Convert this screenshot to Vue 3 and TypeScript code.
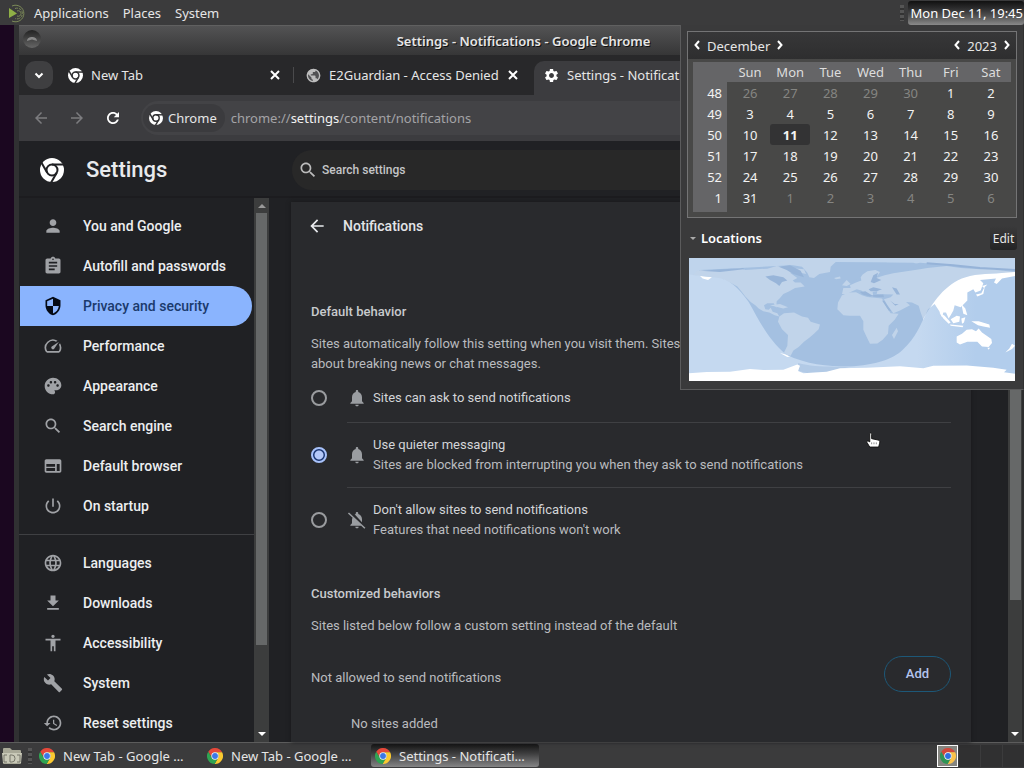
<script setup lang="ts">
import { ref } from 'vue'

interface NavItem {
  label: string
  icon: string
  active?: boolean
}

interface Behavior {
  id: string
  title: string
  detail?: string
  icon: string
}

const icons = {
  person: 'M12 12c2.21 0 4-1.79 4-4s-1.79-4-4-4-4 1.79-4 4 1.79 4 4 4zm0 2c-2.67 0-8 1.34-8 4v2h16v-2c0-2.66-5.33-4-8-4z',
  clipboard: 'M19 3h-4.18C14.4 1.84 13.3 1 12 1c-1.3 0-2.4.84-2.82 2H5c-1.1 0-2 .9-2 2v14c0 1.1.9 2 2 2h14c1.1 0 2-.9 2-2V5c0-1.1-.9-2-2-2zm-7 0c.55 0 1 .45 1 1s-.45 1-1 1-1-.45-1-1 .45-1 1-1zm2 14H7v-2h7v2zm3-4H7v-2h10v2zm0-4H7V7h10v2z',
  shield: 'M12 1L3 5v6c0 5.55 3.84 10.74 9 12 5.16-1.26 9-6.45 9-12V5l-9-4zm0 10.99h7c-.53 4.12-3.28 7.79-7 8.94V12H5V6.3l7-3.11v8.8z',
  speed: 'M20.38 8.57l-1.23 1.85a8 8 0 0 1-.22 7.58H5.07A8 8 0 0 1 15.58 6.85l1.85-1.23A10 10 0 0 0 3.35 19a2 2 0 0 0 1.72 1h13.85a2 2 0 0 0 1.74-1 10 10 0 0 0-.27-10.44zm-9.79 6.84a2 2 0 0 0 2.83 0l5.66-8.49-8.49 5.66a2 2 0 0 0 0 2.83z',
  palette: 'M12 2C6.49 2 2 6.49 2 12s4.49 10 10 10c1.38 0 2.5-1.12 2.5-2.5 0-.61-.23-1.2-.64-1.67-.08-.1-.13-.21-.13-.33 0-.28.22-.5.5-.5H16c3.31 0 6-2.69 6-6 0-4.96-4.49-9-10-9zm-5.5 11c-.83 0-1.5-.67-1.5-1.5S5.67 10 6.5 10s1.5.67 1.5 1.5S7.33 13 6.5 13zm3-4C8.67 9 8 8.33 8 7.5S8.67 6 9.5 6s1.5.67 1.5 1.5S10.33 9 9.5 9zm5 0c-.83 0-1.5-.67-1.5-1.5S13.67 6 14.5 6s1.5.67 1.5 1.5S15.33 9 14.5 9zm3 4c-.83 0-1.5-.67-1.5-1.5s.67-1.5 1.5-1.5 1.5.67 1.5 1.5-.67 1.5-1.5 1.5z',
  search: 'M15.5 14h-.79l-.28-.27C15.41 12.59 16 11.11 16 9.5 16 5.91 13.09 3 9.5 3S3 5.91 3 9.5 5.91 16 9.5 16c1.61 0 3.09-.59 4.23-1.57l.27.28v.79l5 4.99L20.49 19l-4.99-5zm-6 0C7.01 14 5 11.99 5 9.5S7.01 5 9.5 5 14 7.01 14 9.5 11.99 14 9.5 14z',
  web: 'M20 4H4c-1.1 0-1.99.9-1.99 2L2 18c0 1.1.9 2 2 2h16c1.1 0 2-.9 2-2V6c0-1.1-.9-2-2-2zm-5.5 14H4v-3.500h10.500V18zm0-5H4V9.500h10.500V13zm5.500 5h-3.500V9.500H20V18z',
  power: 'M13 3h-2v10h2V3zm4.830 2.170l-1.420 1.420C17.990 7.860 19 9.810 19 12c0 3.870-3.130 7-7 7s-7-3.130-7-7c0-2.190 1.010-4.140 2.580-5.420L6.170 5.170C4.230 6.820 3 9.260 3 12c0 4.970 4.030 9 9 9s9-4.030 9-9c0-2.740-1.230-5.180-3.170-6.830z',
  language: 'M12 2C6.480 2 2 6.480 2 12s4.480 10 10 10 10-4.480 10-10S17.520 2 12 2zm6.930 6h-2.950a15.650 15.650 0 0 0-1.380-3.560A8.030 8.030 0 0 1 18.920 8zM12 4.040c.830 1.200 1.480 2.530 1.910 3.960h-3.820c.430-1.430 1.080-2.760 1.910-3.960zM4.260 14C4.100 13.360 4 12.690 4 12s.1-1.360.260-2h3.380c-.080.660-.140 1.320-.140 2 0 .680.060 1.340.140 2H4.260zm.820 2h2.950c.320 1.250.780 2.450 1.380 3.560A7.990 7.990 0 0 1 5.080 16zm2.950-8H5.080a7.990 7.990 0 0 1 4.330-3.560A15.650 15.650 0 0 0 8.030 8zM12 19.960c-.830-1.200-1.480-2.530-1.910-3.960h3.820c-.430 1.430-1.080 2.760-1.910 3.960zM14.340 14H9.660c-.090-.660-.160-1.320-.160-2 0-.680.070-1.350.160-2h4.680c.090.650.160 1.320.160 2 0 .680-.070 1.340-.160 2zm.250 5.560c.600-1.110 1.060-2.310 1.380-3.560h2.950a8.030 8.030 0 0 1-4.330 3.560zM16.360 14c.080-.660.140-1.320.140-2 0-.680-.060-1.340-.140-2h3.380c.160.640.260 1.310.260 2s-.1 1.360-.260 2h-3.380z',
  download: 'M19 9h-4V3H9v6H5l7 7 7-7zM5 18v2h14v-2H5z',
  accessibility: 'M12 2c1.1 0 2 .9 2 2s-.9 2-2 2-2-.9-2-2 .9-2 2-2zm9 7h-6v13h-2v-6h-2v6H9V9H3V7h18v2z',
  wrench: 'M22.7 19l-9.1-9.1c.9-2.3.4-5-1.5-6.9-2-2-5-2.4-7.4-1.3L9 6 6 9 1.6 4.7C.4 7.1.9 10.1 2.9 12.1c1.9 1.9 4.6 2.4 6.9 1.5l9.1 9.1c.4.4 1 .4 1.4 0l2.3-2.3c.5-.4.5-1.1.1-1.4z',
  restore: 'M13 3c-4.97 0-9 4.03-9 9H1l3.89 3.89.07.14L9 12H6c0-3.87 3.13-7 7-7s7 3.13 7 7-3.13 7-7 7c-1.93 0-3.68-.79-4.94-2.06l-1.42 1.42C8.27 19.99 10.51 21 13 21c4.97 0 9-4.03 9-9s-4.03-9-9-9zm-1 5v5l4.28 2.54.72-1.21-3.5-2.08V8H12z',
  bell: 'M12 22c1.1 0 2-.9 2-2h-4c0 1.1.89 2 2 2zm6-6v-5c0-3.07-1.64-5.64-4.5-6.32V4c0-.83-.67-1.5-1.5-1.5s-1.5.67-1.5 1.5v.68C7.63 5.36 6 7.92 6 11v5l-2 2v1h16v-1l-2-2z',
  bellOff: 'M12 22c1.1 0 2-.9 2-2h-4c0 1.1.89 2 2 2zM18 14.700V11c0-3.070-1.640-5.640-4.500-6.320V4c0-.830-.670-1.500-1.500-1.500s-1.500.670-1.500 1.500v.680c-.500.120-.970.300-1.400.530zM2.400 2.900L1.100 4.200l5.600 5.200c-.450.900-.700 1.500-.700 2.600v4l-2 2v1h13l3.800 3.500 1.300-1.300z',
  back: 'M20 11H7.83l5.59-5.59L12 4l-8 8 8 8 1.41-1.41L7.83 13H20v-2z',
  forward: 'M4 11h12.170l-5.590-5.590L12 4l8 8-8 8-1.410-1.410L16.170 13H4v-2z',
  reload: 'M17.650 6.350C16.200 4.900 14.210 4 12 4c-4.420 0-8 3.580-8 8s3.580 8 8 8c3.730 0 6.840-2.550 7.730-6h-2.500c-.820 2.100-2.800 3.700-5.230 3.700A5.700 5.700 0 1 1 12 6.300c1.560 0 2.960.640 4 1.670L13 11h7V4l-2.350 2.350z',
  gear: 'M19.14 12.94c.04-.3.06-.61.06-.94 0-.32-.02-.64-.07-.94l2.03-1.58c.18-.14.23-.41.12-.61l-1.92-3.32c-.12-.22-.37-.29-.59-.22l-2.39.96c-.5-.38-1.03-.7-1.62-.94l-.36-2.54c-.04-.24-.24-.41-.48-.41h-3.84c-.24 0-.43.17-.47.41l-.36 2.54c-.59.24-1.13.57-1.62.94l-2.39-.96c-.22-.08-.47 0-.59.22L2.74 8.87c-.12.21-.08.47.12.61l2.03 1.58c-.05.3-.09.63-.09.94s.02.64.07.94l-2.03 1.58c-.18.14-.23.41-.12.61l1.92 3.32c.12.22.37.29.59.22l2.39-.96c.5.38 1.03.7 1.62.94l.36 2.54c.05.24.24.41.48.41h3.84c.24 0 .44-.17.47-.41l.36-2.54c.59-.24 1.13-.56 1.62-.94l2.39.96c.22.08.47 0 .59-.22l1.92-3.32c.12-.22.07-.47-.12-.61l-2.01-1.58zM12 15.6c-1.98 0-3.6-1.62-3.6-3.6s1.62-3.6 3.6-3.6 3.6 1.62 3.6 3.6-1.62 3.6-3.6 3.6z',
  globe: 'M12 2C6.480 2 2 6.480 2 12s4.480 10 10 10 10-4.480 10-10S17.520 2 12 2zm-1 17.930c-3.950-.490-7-3.850-7-7.930 0-.620.080-1.210.210-1.790L9 15v1c0 1.100.9 2 2 2v1.930zm6.900-2.540c-.260-.810-1-1.390-1.900-1.390h-1v-3c0-.550-.450-1-1-1H8v-2h2c.550 0 1-.450 1-1V7h2c1.100 0 2-.9 2-2v-.410c2.930 1.190 5 4.060 5 7.410 0 2.080-.8 3.970-2.100 5.390z',
}

const navPrimary: NavItem[] = [
  { label: 'You and Google', icon: icons.person },
  { label: 'Autofill and passwords', icon: icons.clipboard },
  { label: 'Privacy and security', icon: icons.shield, active: true },
  { label: 'Performance', icon: icons.speed },
  { label: 'Appearance', icon: icons.palette },
  { label: 'Search engine', icon: icons.search },
  { label: 'Default browser', icon: icons.web },
  { label: 'On startup', icon: icons.power },
]

const navSecondary: NavItem[] = [
  { label: 'Languages', icon: icons.language },
  { label: 'Downloads', icon: icons.download },
  { label: 'Accessibility', icon: icons.accessibility },
  { label: 'System', icon: icons.wrench },
  { label: 'Reset settings', icon: icons.restore },
]

const behaviors: Behavior[] = [
  { id: 'ask', title: 'Sites can ask to send notifications', icon: icons.bell },
  { id: 'quiet', title: 'Use quieter messaging', detail: 'Sites are blocked from interrupting you when they ask to send notifications', icon: icons.bell },
  { id: 'block', title: "Don't allow sites to send notifications", detail: "Features that need notifications won't work", icon: icons.bellOff },
]
const selected = ref('quiet')

const weekdays = ['Sun', 'Mon', 'Tue', 'Wed', 'Thu', 'Fri', 'Sat']
const weeks = [48, 49, 50, 51, 52, 1].map((week, row) => ({
  week,
  days: weekdays.map((_, col) => {
    const offset = row * 7 + col - 4
    if (offset < 1) return { n: offset + 30, muted: true, today: false }
    if (offset > 31) return { n: offset - 31, muted: true, today: false }
    return { n: offset, muted: false, today: offset === 11 }
  }),
}))

const tasks = [
  { title: 'New Tab - Google …', active: false },
  { title: 'New Tab - Google …', active: false },
  { title: 'Settings - Notificati…', active: true },
]

const land = [
  'M38 150L50 138L62 134L110 136L180 128L196 134L262 130L290 122L330 128L372 132L378 146L350 140L330 142L352 158L338 166L345 172L362 172L374 184L345 188L328 198L310 206L300 218L290 228L289 248L281 234L262 234L252 240L256 252L266 254L272 248L278 260L292 264L298 274L284 270L268 262L250 258L236 250L226 240L212 230L196 214L184 198L172 184L150 172L128 162L96 158Z',
  'M290 112L330 104L440 100L467 110L452 124L450 140L418 146L402 158L388 156L382 142L366 124L330 118Z',
  'M298 274L312 264L342 262L366 274L384 278L392 290L420 298L416 312L402 326L388 338L372 350L356 366L340 376L332 392L320 390L312 382L322 362L324 330L306 312L294 290Z',
  'M486 210L506 202L528 201L546 210L562 215L606 220L618 244L632 264L656 266L644 284L626 302L624 326L608 344L592 355L570 356L560 336L550 314L550 288L540 272L508 272L490 270L472 252L474 232Z',
  'M486 206L490 188L512 188L510 180L528 172L544 166L542 156L548 148L562 138L586 134L600 140L588 158L614 150L640 144L690 136L720 132L742 128L800 122L842 128L900 132L950 134L1005 140L1005 152L966 160L950 176L942 172L948 160L900 164L910 174L902 196L886 202L880 192L862 202L862 226L842 246L824 240L820 256L812 270L806 280L798 262L790 262L786 276L778 258L764 236L744 252L730 284L722 262L716 242L696 232L678 230L690 240L660 256L640 264L622 240L612 222L632 216L640 208L590 206L592 198L578 200L580 216L558 208L544 196L530 192L512 200L500 206Z',
  'M486 180L500 164L512 176L500 182ZM462 158L480 154L482 160L468 162ZM636 330L650 308L654 318L642 342Z',
  'M830 352L830 334L846 326L860 314L876 312L888 318L896 310L906 322L934 342L936 354L926 366L906 364L892 350L862 350L840 358ZM922 368L930 368L926 374Z',
  'M778 262L794 272L812 292L806 296L790 280ZM812 282L830 272L840 274L838 290L820 294ZM844 280L856 276L852 292L846 296ZM810 298L850 302L848 306L812 302ZM874 288L896 288L928 298L930 308L910 304L894 300ZM844 236L856 250L862 270L850 266ZM888 208L904 204L912 188L906 182L922 178L914 186L910 206L892 214Z',
  'M996 356L1005 362L996 372L976 382L988 370Z',
  'M300 384L318 388L330 394L322 396ZM60 152L96 156L84 164L68 160Z',
]
const antarctica = 'M27 445L80 441L150 440L210 432L250 435L310 434L352 418L360 422L354 438L370 445L440 440L480 430L560 428L660 424L730 430L760 422L860 421L940 428L980 434L972 442L1005 446V468H27Z'
const dayArea = 'M27 148L104 157C150 160 176 190 206 230C240 290 262 340 318 388C380 418 440 424 506 424C590 420 640 400 666 376C710 336 720 300 736 270C764 226 800 168 870 152C910 144 950 146 1005 140V468H27Z'
const chromeSector = 'M-10.1-6.490A12 12 0 0 1 10.670-5.500L0-5.500A5.500 5.500 0 0 0-4.760 2.750Z'
</script>

<template>
  <div class="desktop">
    <header class="panel top-panel">
      <svg class="distro" viewBox="0 0 20 20" aria-hidden="true">
        <path d="M2 5L10 10.500L2 15Z" fill="#8fb046" />
        <g fill="none" stroke="#7c8a58">
          <path d="M5 3A8.300 8.300 0 1 1 5 18" />
          <path d="M8 5.500A5.400 5.400 0 1 1 8 15.500" stroke-dasharray="3 1" />
          <path d="M10 8A2.800 2.800 0 1 1 10 13" />
        </g>
      </svg>
      <nav class="menus">
        <button type="button">Applications</button>
        <button type="button">Places</button>
        <button type="button">System</button>
      </nav>
      <span class="grip"></span>
      <button type="button" class="clock">Mon Dec 11, 19:45</button>
    </header>

    <div class="workspace">
      <section class="window">
        <div class="titlebar">
          <button type="button" class="window-menu" aria-label="Window menu">
            <svg viewBox="0 0 18 18"><path d="M4 11C4 5.500 14 5.500 14 11L9 9.500Z" fill="#888" /></svg>
          </button>
          <h2>Settings - Notifications - Google Chrome</h2>
        </div>

        <div class="tabstrip">
          <button type="button" class="tab-search" aria-label="Search tabs">
            <svg viewBox="0 0 12 12"><path d="M2.500 4.500L6 8L9.500 4.500" fill="none" stroke="#fff" stroke-width="2" /></svg>
          </button>
          <div class="tab first">
            <svg class="tab-icon mono" viewBox="-12 -12 24 24">
              <circle r="12" fill="#fff" />
              <g fill="none" stroke-width="2.400"><circle r="5.500" /><path d="M0-5.500H12" /><path d="M0-5.500H12" transform="rotate(120)" /><path d="M0-5.500H12" transform="rotate(240)" /></g>
            </svg>
            <span class="tab-title">New Tab</span>
            <button type="button" class="close" aria-label="Close New Tab">
              <svg viewBox="0 0 10 10"><path d="M1 1L9 9M9 1L1 9" stroke="#fff" stroke-width="2" /></svg>
            </button>
          </div>
          <div class="tab second">
            <svg class="tab-icon globe" viewBox="1 1 22 22"><circle cx="12" cy="12" r="10" fill="#515153" /><path :d="icons.globe" /></svg>
            <span class="tab-title">E2Guardian - Access Denied</span>
            <button type="button" class="close" aria-label="Close E2Guardian">
              <svg viewBox="0 0 10 10"><path d="M1 1L9 9M9 1L1 9" stroke="#fff" stroke-width="2" /></svg>
            </button>
          </div>
          <div class="tab current">
            <svg class="tab-icon" viewBox="1 1 22 22"><path :d="icons.gear" /></svg>
            <span class="tab-title">Settings - Notifications</span>
          </div>
        </div>

        <div class="toolbar">
          <button type="button" class="tool dim" aria-label="Back"><svg viewBox="0 0 24 24"><path :d="icons.back" /></svg></button>
          <button type="button" class="tool dim" aria-label="Forward"><svg viewBox="0 0 24 24"><path :d="icons.forward" /></svg></button>
          <button type="button" class="tool" aria-label="Reload"><svg viewBox="0 0 24 24"><path :d="icons.reload" /></svg></button>
          <div class="omnibox">
            <span class="chip">
              <svg class="tab-icon mono" viewBox="-12 -12 24 24">
                <circle r="12" fill="#fff" />
                <g fill="none" stroke-width="2.400"><circle r="5.500" /><path d="M0-5.500H12" /><path d="M0-5.500H12" transform="rotate(120)" /><path d="M0-5.500H12" transform="rotate(240)" /></g>
              </svg>
              Chrome
            </span>
            <span class="url" role="textbox" aria-label="Address">chrome://<b>settings</b>/content/notifications</span>
          </div>
        </div>

        <div class="settings-head">
          <svg class="brand mono" viewBox="-12 -12 24 24">
            <circle r="12" fill="#fff" />
            <g fill="none" stroke-width="2"><circle r="5.500" /><path d="M0-5.500H12" /><path d="M0-5.500H12" transform="rotate(120)" /><path d="M0-5.500H12" transform="rotate(240)" /></g>
          </svg>
          <h1>Settings</h1>
          <label class="search">
            <svg viewBox="0 0 24 24" aria-hidden="true"><path :d="icons.search" /></svg>
            <input type="search" placeholder="Search settings" aria-label="Search settings" />
          </label>
        </div>

        <div class="settings-body">
          <nav class="sidebar">
            <a v-for="item in navPrimary" :key="item.label" href="#" :class="{ active: item.active }">
              <svg viewBox="0 0 24 24" aria-hidden="true"><path :d="item.icon" /></svg>{{ item.label }}
            </a>
            <hr />
            <a v-for="item in navSecondary" :key="item.label" href="#">
              <svg viewBox="0 0 24 24" aria-hidden="true"><path :d="item.icon" /></svg>{{ item.label }}
            </a>
          </nav>
          <div class="scrollbar side-scroll">
            <svg viewBox="0 0 8 4"><path d="M0 4L4 0L8 4Z" fill="#999" /></svg>
            <span class="thumb"></span>
            <svg viewBox="0 0 8 4"><path d="M0 0L4 4L8 0Z" fill="#fff" /></svg>
          </div>

          <main class="card">
            <div class="card-head">
              <button type="button" aria-label="Back"><svg viewBox="0 0 24 24"><path :d="icons.back" /></svg></button>
              <h2>Notifications</h2>
            </div>
            <h3>Default behavior</h3>
            <p class="intro">Sites automatically follow this setting when you visit them. Sites usually send notifications to let you know about breaking news or chat messages.</p>
            <div class="options">
              <label v-for="b in behaviors" :key="b.id" class="option" :class="{ single: !b.detail }">
                <input v-model="selected" type="radio" name="behavior" :value="b.id" />
                <span class="option-body">
                  <svg viewBox="0 0 24 24" aria-hidden="true"><path :d="b.icon" /></svg>
                  <span class="option-text">
                    <span class="option-title">{{ b.title }}</span>
                    <span v-if="b.detail" class="option-detail">{{ b.detail }}</span>
                  </span>
                </span>
              </label>
            </div>
            <h3 class="custom">Customized behaviors</h3>
            <p class="note">Sites listed below follow a custom setting instead of the default</p>
            <div class="blocked">
              <span>Not allowed to send notifications</span>
              <button type="button">Add</button>
            </div>
            <p class="empty">No sites added</p>
          </main>

          <div class="scrollbar main-scroll">
            <span class="thumb"></span>
            <svg viewBox="0 0 8 4"><path d="M0 0L4 4L8 0Z" fill="#fff" /></svg>
          </div>
        </div>
      </section>

      <aside class="popup">
        <div class="calendar">
          <div class="cal-head">
            <button type="button" aria-label="Previous month"><svg viewBox="0 0 6 10"><path d="M5 1L1.500 5L5 9" /></svg></button>
            <span>December</span>
            <button type="button" aria-label="Next month"><svg viewBox="0 0 6 10"><path d="M1 1L4.500 5L1 9" /></svg></button>
            <i></i>
            <button type="button" aria-label="Previous year"><svg viewBox="0 0 6 10"><path d="M5 1L1.500 5L5 9" /></svg></button>
            <span>2023</span>
            <button type="button" aria-label="Next year"><svg viewBox="0 0 6 10"><path d="M1 1L4.500 5L1 9" /></svg></button>
          </div>
          <table>
            <thead>
              <tr><th class="wk"></th><th v-for="d in weekdays" :key="d">{{ d }}</th></tr>
            </thead>
            <tbody>
              <tr v-for="w in weeks" :key="w.week">
                <th class="wk">{{ w.week }}</th>
                <td v-for="(d, i) in w.days" :key="i" :class="{ muted: d.muted, today: d.today }">{{ d.n }}</td>
              </tr>
              <tr class="tail"><th class="wk"></th><td colspan="7"></td></tr>
            </tbody>
          </table>
        </div>
        <div class="loc-head">
          <svg viewBox="0 0 6 3"><path d="M0 0H6L3 3Z" fill="#aaa" /></svg>
          <strong>Locations</strong>
          <button type="button">Edit</button>
        </div>
        <div class="map-frame">
          <svg class="map" viewBox="27 98 978 370" preserveAspectRatio="none" role="img" aria-label="World map">
            <defs>
              <clipPath id="daylight"><path :d="dayArea" /></clipPath>
              <linearGradient id="day-sea" x1="0" x2="1" y1="0" y2="0">
                <stop offset="0" stop-color="#c5d9f0" />
                <stop offset="0.700" stop-color="#c5d9f0" />
                <stop offset="0.880" stop-color="#b2cdec" />
                <stop offset="1" stop-color="#b2cdec" />
              </linearGradient>
            </defs>
            <rect x="27" y="98" width="978" height="370" fill="#a4c0e1" />
            <path d="M27 98H1005V138L820 120L720 112L660 124L620 112H460L290 122L180 128L60 134L27 160Z" fill="#bfd4ec" />
            <path d="M466 110L700 112L730 122L640 140L600 134L560 138L520 168L470 190L440 150Z" fill="#a4c0e1" />
            <path d="M740 114L820 120L900 128L1005 134" fill="none" stroke="#96b3d8" stroke-width="6" />
            <g fill="#c1d4ea"><path v-for="(d, i) in land" :key="i" :d="d" /></g>
            <path :d="dayArea" fill="url(#day-sea)" />
            <g fill="#fff" clip-path="url(#daylight)"><path v-for="(d, i) in land.slice(4)" :key="i" :d="d" /></g>
            <path d="M354 414C400 426 450 426 520 424L470 434L440 442L380 444L356 438Z" fill="#b2cae6" />
            <path :d="antarctica" fill="#fff" />
            <g fill="#98b5d9">
              <path d="M256 154L280 150L310 156L322 166L306 170L298 182L288 174L270 164Z" />
              <path d="M296 124L330 120L362 136L372 156L340 146L320 134Z" />
              <path d="M540 200L556 198L576 210L610 208L612 216L570 214L548 208ZM566 192L580 186L606 192L590 198L572 198Z" />
              <path d="M606 226L614 228L634 258L626 256ZM630 226L644 236L656 236L646 242ZM636 186L650 190L660 208L650 208L642 196Z" />
              <path d="M572 170L580 150L594 142L590 158L604 164L582 174Z" />
              <path d="M60 136L190 128L192 132L120 140Z" />
            </g>
            <path d="M270 240L300 236L324 246L310 250Z" fill="#c1d4ea" />
          </svg>
        </div>
      </aside>

      <svg class="pointer" viewBox="0 0 16 18" aria-hidden="true">
        <path d="M4 1.500C5 .500 6 1 6 2.500V7L13 8.500C15 9 15 10 14.500 12L13.500 16H4L1 11C.500 9.500 2 9 4 10.500Z" fill="#fff" stroke="#111" />
        <path d="M6 11V13M8.500 11V13M11 11V13" stroke="#888" />
      </svg>
    </div>

    <footer class="panel bottom-panel">
      <button type="button" class="show-desktop" aria-label="Show desktop">
        <svg viewBox="0 0 20 18">
          <path d="M1 4V2Q1 1 2 1H8L10 3H18Q19 3 19 4V16Q19 17 18 17H2Q1 17 1 16Z" fill="#a9a998" />
          <path d="M0 6H20L19 16H1Z" fill="#c9c9b8" />
          <path d="M5 8H2V15H5M15 8H18V15H15M8 8H10Q13 8 13 11.500T10 15H8Z" fill="none" stroke="#77776a" />
        </svg>
      </button>
      <span class="grip"></span>
      <button v-for="(t, i) in tasks" :key="i" type="button" class="task" :class="{ active: t.active }">
        <svg viewBox="-12 -12 24 24" aria-hidden="true">
          <path :d="chromeSector" fill="#e5483a" />
          <path :d="chromeSector" fill="#fbc930" transform="rotate(120)" />
          <path :d="chromeSector" fill="#2fa452" transform="rotate(240)" />
          <circle r="5.500" fill="#fff" /><circle r="4.400" fill="#3b78e7" />
        </svg>
        <span>{{ t.title }}</span>
      </button>
      <div class="workspaces">
        <button type="button" class="ws active" aria-label="Workspace 1">
          <svg viewBox="-12 -12 24 24">
            <path :d="chromeSector" fill="#d0473b" />
            <path :d="chromeSector" fill="#fbc24a" transform="rotate(120)" />
            <path :d="chromeSector" fill="#2f9455" transform="rotate(240)" />
            <circle r="5.500" fill="#fff" /><circle r="4.400" fill="#2f6fe0" />
          </svg>
        </button>
        <button type="button" class="ws" aria-label="Workspace 2"></button>
        <button type="button" class="ws" aria-label="Workspace 3"></button>
        <button type="button" class="ws" aria-label="Workspace 4"></button>
      </div>
    </footer>
  </div>
</template>

<style>
html,
body {
  margin: 0;
  background: #1b0720;
}
</style>

<style scoped>
* {
  box-sizing: border-box;
}
.desktop {
  height: 100vh;
  display: flex;
  flex-direction: column;
  overflow: hidden;
  font-family: 'Noto Sans', sans-serif;
  font-size: 13px;
  color: #e6e6e6;
  background: #1b0720;
}
button {
  font: inherit;
  color: inherit;
  background: none;
  border: 0;
  padding: 0;
}
svg {
  display: block;
  flex: none;
}
h1,
h2,
h3,
p {
  margin: 0;
}
.panel {
  flex: none;
  display: flex;
  align-items: center;
  background: #3b3b3c;
}
.top-panel {
  height: 25px;
  padding-left: 7px;
}
.distro {
  width: 20px;
  height: 20px;
}
.menus {
  display: flex;
  gap: 14px;
  padding-left: 7px;
  flex: 1;
}
.grip {
  width: 4px;
  height: 16px;
  background: repeating-linear-gradient(#555 0 3px, #333 3px 5px);
}
.clock {
  height: 24px;
  margin-left: 4px;
  padding: 0 1px 0 3px;
  border-radius: 3px;
  background: linear-gradient(#111, #2c2c2d 30%, #555 65%, #8a8a8a);
  color: #fff;
}
.workspace {
  position: relative;
  flex: 1;
  min-height: 0;
  display: flex;
  padding-left: 14px;
}
.window {
  flex: 1;
  min-width: 0;
  display: flex;
  flex-direction: column;
  background: #202124;
  border-left: 5px solid #303032;
}
.titlebar {
  height: 30px;
  flex: none;
  display: flex;
  align-items: center;
  background: linear-gradient(#535354, #363637);
  border-top: 1px solid #606060;
  padding-left: 4px;
}
.window-menu {
  width: 18px;
  height: 18px;
  margin-bottom: 4px;
  border-radius: 50%;
  background: linear-gradient(#222, #666);
}
.titlebar h2 {
  flex: 1;
  padding-right: 18px;
  text-align: center;
  font-size: 13px;
  line-height: 20px;
  font-weight: 600;
  text-shadow: 1px 1px #111;
}
.tabstrip {
  flex: none;
  height: 40px;
  display: flex;
  align-items: center;
  background: #28282a;
  padding-left: 6px;
}
.tab-search {
  width: 28px;
  height: 28px;
  border-radius: 10px;
  background: #3f3f41;
  display: grid;
  place-items: center;
}
.tab-search svg {
  width: 12px;
  height: 12px;
}
.tab {
  display: flex;
  align-items: center;
  height: 32px;
  flex: none;
}
.tab-icon {
  width: 14px;
  height: 14px;
  fill: #fff;
}
.mono g {
  stroke: #303032;
}
.tab .tab-icon {
  width: 15px;
  height: 15px;
  margin-right: 8px;
}
.tab .globe {
  fill: #bdbdbd;
}
.tab-title {
  flex: 1;
  white-space: nowrap;
}
.first {
  width: 241px;
  height: 16px;
  padding: 0 13px 0 15px;
  border-right: 1px solid #4a4a4c;
}
.second {
  width: 240px;
  padding: 0 16px 0 12px;
}
.current {
  flex: 1;
  align-self: flex-end;
  height: 34px;
  min-width: 0;
  padding: 0 0 6px 10px;
  border-radius: 10px 0 0;
  background: #3c3c3f;
}
.close {
  width: 10px;
  height: 10px;
}
.close svg {
  width: 10px;
  height: 10px;
}
.toolbar {
  flex: none;
  height: 46px;
  display: flex;
  align-items: center;
  gap: 8px;
  padding: 0 0 0 8px;
  background: #3c3c3f;
}
.tool {
  width: 28px;
  height: 28px;
  display: grid;
  place-items: center;
}
.tool svg {
  width: 18px;
  height: 18px;
  fill: #fff;
}
.tool.dim svg {
  fill: #7c7c7f;
}
.omnibox {
  flex: 1;
  height: 34px;
  margin-left: 6px;
  border-radius: 17px 0 0 17px;
  display: flex;
  align-items: center;
  gap: 6px;
  padding-left: 2px;
  background: #434346;
}
.chip {
  height: 28px;
  border-radius: 14px;
  display: flex;
  align-items: center;
  gap: 5px;
  padding: 0 8px 0 6px;
  background: #3b3b3e;
}
.url {
  color: #a3a3a6;
}
.url b {
  color: #f2f2f2;
  font-weight: 400;
}
.settings-head {
  flex: none;
  height: 57px;
  display: flex;
  align-items: center;
  padding: 2px 0 0 21px;
  border-bottom: 2px solid #1c1c1f;
  font-family: Roboto, sans-serif;
}
.brand {
  width: 24px;
  height: 24px;
}
.settings-head .brand g {
  stroke: #202124;
}
h1 {
  width: 206px;
  margin-left: 22px;
  font-size: 22px;
  line-height: 28px;
  font-weight: 500;
  color: #e8eaed;
}
.search {
  flex: 1;
  height: 40px;
  display: flex;
  align-items: center;
  gap: 4px;
  padding-left: 6px;
  border-radius: 20px 0 0 20px;
  background: #282828;
}
.search svg {
  width: 20px;
  height: 20px;
  fill: #bbb;
}
.search input {
  flex: 1;
  border: 0;
  padding: 0;
  outline: 0;
  background: none;
  font: 500 12px/20px Roboto, sans-serif;
  color: #ccc;
}
.search input::placeholder {
  color: #c4c5c7;
  opacity: 1;
}
.settings-body {
  flex: 1;
  min-height: 0;
  display: flex;
  font-family: Roboto, sans-serif;
}
.sidebar {
  width: 235px;
  flex: none;
  padding: 8px 2px 0 1px;
  overflow: hidden;
}
.sidebar a {
  display: flex;
  align-items: center;
  gap: 20px;
  height: 40px;
  padding-left: 23px;
  border-radius: 0 20px 20px 0;
  font-size: 14px;
  font-weight: 500;
  color: #eceef0;
  text-decoration: none;
}
.sidebar svg {
  width: 20px;
  height: 20px;
  fill: #a0a2a6;
}
.sidebar a.active {
  background: #8ab4fe;
  color: #1b3a6c;
}
.sidebar a.active svg {
  fill: #050a14;
}
.sidebar hr {
  height: 1px;
  margin: 8px -2px;
  border: 0;
  background: #3f4043;
}
.scrollbar {
  flex: none;
  display: flex;
  flex-direction: column;
  align-items: center;
  background: #3c3d3d;
}
.scrollbar svg {
  width: 8px;
  height: 4px;
}
.side-scroll {
  width: 15px;
  padding: 6px 0;
}
.side-scroll .thumb {
  flex: 0 1 432px;
  width: 11px;
  margin: 5px 0 auto;
  background: #666868;
}
.card {
  flex: 1;
  min-width: 0;
  margin: 4px 37px 0 22px;
  padding: 14px 20px 0;
  background: #292a2d;
  box-shadow: 0 0 4px #17181a;
  font-size: 13px;
  line-height: 20px;
  color: #b9bbbf;
  overflow: hidden;
}
.card-head {
  display: flex;
  align-items: center;
  gap: 16px;
  height: 20px;
}
.card-head svg {
  width: 20px;
  height: 20px;
  fill: #e8eaed;
}
.card-head button {
  margin-left: -4px;
}
.card-head h2 {
  font-size: 14px;
  line-height: 20px;
  font-weight: 500;
  color: #e2e4e7;
}
h3 {
  margin-top: 66px;
  font-size: 13px;
  line-height: 20px;
  font-weight: 500;
  color: #c8cacd;
}
.intro {
  margin-top: 12px;
}
.option {
  display: flex;
  align-items: center;
  height: 65px;
}
.option.single {
  height: 49px;
}
.option input {
  appearance: none;
  flex: none;
  width: 16px;
  height: 16px;
  margin: 0 0 2px;
  border: 2px solid #9a9c9f;
  border-radius: 50%;
}
.option input:checked {
  border-color: #a8c2fa;
  background: radial-gradient(circle, #b4c8f8 0 4px, #17326e 5px);
}
.option-body {
  flex: 1;
  align-self: stretch;
  margin-left: 20px;
  display: flex;
  align-items: center;
  gap: 6px;
  border-bottom: 1px solid #3f4043;
}
.option:last-child .option-body {
  border-bottom-color: transparent;
}
.option-body svg {
  width: 20px;
  height: 20px;
  fill: #9a9da1;
}
.option-text {
  display: flex;
  flex-direction: column;
}
.option-title {
  color: #d3d5d8;
}
h3.custom {
  margin-top: 31px;
}
.note {
  margin-top: 12px;
}
.blocked {
  display: flex;
  align-items: center;
  justify-content: space-between;
  height: 36px;
  margin-top: 20px;
}
.blocked span {
  padding-top: 8px;
}
.blocked button {
  width: 67px;
  height: 36px;
  border: 1px solid #1d5878;
  border-radius: 18px;
  font-weight: 500;
  color: #b4c4ee;
}
.empty {
  margin: 22px 0 0 40px;
}
.main-scroll {
  width: 16px;
  border-right: 2px solid #2c2c2d;
  padding-bottom: 6px;
}
.main-scroll .thumb {
  flex: 0 1 402px;
  width: 11px;
  margin-bottom: auto;
  background: #666868;
}
.popup {
  position: absolute;
  top: 0;
  right: 0;
  width: 344px;
  padding: 6px 6px 8px;
  background: #3a3a3b;
  border: 1px solid #5b5b5c;
  border-right-color: #303030;
  border-top: 0;
}
.calendar {
  border: 1px solid #747475;
  background: #484847;
  padding-bottom: 5px;
}
.cal-head {
  height: 27px;
  display: flex;
  align-items: center;
  gap: 7px;
  padding: 0 6px;
  background: linear-gradient(#373738, #2e2e2f);
}
.cal-head i {
  flex: 1;
}
.cal-head button {
  width: 6px;
  height: 10px;
  margin-bottom: 2px;
}
.cal-head svg {
  width: 6px;
  height: 10px;
  fill: none;
  stroke: #fff;
  stroke-width: 2px;
}
table {
  width: calc(100% - 10px);
  margin: 3px 5px 0;
  border-spacing: 0;
  table-layout: fixed;
}
th,
td {
  height: 21px;
  padding: 0;
  line-height: 18px;
  font-weight: 400;
  text-align: center;
  color: #f3f3f3;
}
thead th {
  height: 20px;
  background: #656567;
  color: #ddd;
}
th.wk {
  width: 37px;
  padding-right: 8px;
  text-align: right;
  background: linear-gradient(90deg, #656567 34px, transparent 34px);
}
thead th.wk {
  background: #656567;
}
td.muted {
  color: #858582;
}
td.today {
  background: #333334;
  border-radius: 3px;
  font-weight: 700;
}
.tail th,
.tail td {
  height: 4px;
}
.loc-head {
  height: 40px;
  display: flex;
  align-items: center;
  gap: 5px;
  padding-left: 3px;
}
.loc-head svg {
  width: 6px;
  height: 3px;
}
.loc-head strong {
  flex: 1;
  font-weight: 600;
  color: #fff;
}
.loc-head button {
  width: 27px;
  height: 24px;
  border-radius: 3px;
  background: linear-gradient(#3a3a3b, #242425);
  font-size: 12px;
}
.map-frame {
  padding: 0 2px;
}
.map {
  width: 100%;
  height: 123px;
}
.pointer {
  position: absolute;
  left: 866px;
  top: 407px;
  width: 15px;
  height: 17px;
}
.bottom-panel {
  height: 26px;
  border-top: 1px solid #5c5c5c;
}
.show-desktop {
  width: 20px;
  margin: 0 6px 0 2px;
}
.show-desktop svg {
  width: 20px;
  height: 18px;
}
.task {
  width: 168px;
  height: 23px;
  display: flex;
  align-items: center;
  gap: 8px;
  padding-left: 4px;
  border-radius: 3px;
  text-align: left;
  white-space: nowrap;
}
.task svg {
  width: 16px;
  height: 16px;
}
.task.active {
  background: linear-gradient(#151515, #3c3c3d 40%, #858586);
}
.bottom-panel .grip {
  margin-right: 3px;
}
.workspaces {
  margin-left: auto;
  display: flex;
  align-self: stretch;
  gap: 1px;
  align-items: center;
}
.ws {
  width: 21px;
  height: 22px;
  background: #303031;
}
.ws.active {
  border: 1px solid #fff;
  background: #858580;
  display: grid;
  place-items: center;
}
.ws svg {
  width: 16px;
  height: 16px;
}
</style>
